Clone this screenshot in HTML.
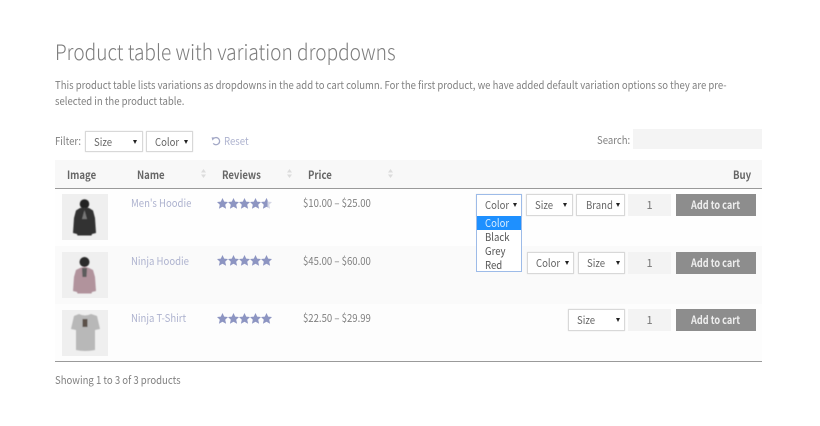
<!DOCTYPE html>
<html><head><meta charset="utf-8"><style>
html,body{margin:0;padding:0;background:#fff}
body{width:820px;height:426px;position:relative;overflow:hidden;font-family:"Noto Sans CJK JP","Liberation Sans",sans-serif;font-size:11px;color:#808080;filter:blur(.25px)}
.a{position:absolute;white-space:nowrap}
.t{position:absolute;white-space:nowrap;line-height:14px;height:14px;transform:scaleX(.87);transform-origin:0 50%}
.s{position:absolute;box-sizing:border-box;background:#fff;border:1px solid #d8d8d8;box-shadow:0 0 1px #ddd;color:#666;font-size:11px;line-height:20px}
.s span{position:absolute;top:0;transform:scaleX(.87);transform-origin:0 50%}
.s i{position:absolute;top:8px;width:0;height:0;border-left:2.5px solid transparent;border-right:2.5px solid transparent;border-top:4px solid #222}
.q{position:absolute;left:628px;width:43px;height:22px;background:#f3f3f3;color:#777;text-align:center;line-height:22px;font-size:11px}
.b{position:absolute;left:676px;width:80px;height:22px;background:#8d8d8d;color:#eee;text-align:center;line-height:23px;font-size:11px;font-weight:700}
.b span{display:inline-block;transform:scaleX(.83)}
.h{font-weight:700;color:#666;font-size:11px}
.n{color:#aeb3cf;font-size:11px}
.p{color:#808080;font-size:11px}
.im{position:absolute;left:62px;width:46px;height:46px}
.so{position:absolute;width:7px;height:11px}
.dd div{height:14px;line-height:14px;padding-left:8px}
.dd div span{display:inline-block;transform:scaleX(.87);transform-origin:0 50%}
</style></head><body>
<svg width="0" height="0" style="position:absolute"><defs><polygon id="st" points="5.5,0 7.2,3.6 11,4 8.2,6.700 9.100,10.800 5.500,8.800 1.900,10.800 2.800,6.700 0,4 3.800,3.600"/><filter id="bl"><feGaussianBlur stdDeviation=".5"/></filter><clipPath id="c"><rect x="0" width="6.500" height="11"/></clipPath></defs></svg>

<div class="a" style="left:55px;top:38px;font-size:21.5px;line-height:28px;color:#7d7d7d;font-weight:300;transform:scaleX(.888);transform-origin:0 50%">Product table with variation dropdowns</div>
<div class="t" style="left:55px;top:78px;font-size:10.8px;transform:scaleX(.883)">This product table lists variations as dropdowns in the add to cart column. For the first product, we have added default variation options so they are pre-</div>
<div class="t" style="left:55px;top:94px;font-size:10.8px;transform:scaleX(.883)">selected in the product table.</div>

<div class="t" style="left:55px;top:134px">Filter:</div>
<div class="s" style="left:85px;top:131px;width:58px;height:21px"><span style="left:8px">Size</span><i style="left:47px"></i></div>
<div class="s" style="left:146px;top:131px;width:47px;height:21px"><span style="left:8px">Color</span><i style="left:37px"></i></div>
<svg class="a" style="left:211px;top:136px" width="10" height="10" viewBox="0 0 10 10"><path d="M2 3.2A3.6 3.6 0 1 1 2.2 7.400" fill="none" stroke="#a3a8c6" stroke-width="1.3"/><path d="M.6 1.4 4 1.4 1.4 4.600Z" fill="#a3a8c6"/></svg>
<div class="t" style="left:224px;top:134px;color:#aeb3cf">Reset</div>
<div class="t" style="left:597px;top:133px">Search:</div>
<div class="a" style="left:633px;top:129px;width:129px;height:20px;background:#f4f4f4"></div>

<!-- table -->
<div class="a" style="left:55px;top:160px;width:707px;height:28px;background:#f8f8f8"></div>
<div class="a" style="left:55px;top:188px;width:707px;height:1px;background:#9a9a9a"></div>
<div class="a" style="left:55px;top:189px;width:707px;height:57px;background:#fefefe"></div>
<div class="a" style="left:55px;top:246px;width:707px;height:58px;background:#fafafa"></div>
<div class="a" style="left:55px;top:304px;width:707px;height:57px;background:#fdfdfd"></div>
<div class="a" style="left:55px;top:361px;width:707px;height:1px;background:#9a9a9a"></div>

<div class="t h" style="left:67px;top:168px">Image</div>
<div class="t h" style="left:137px;top:168px">Name</div>
<div class="t h" style="left:222px;top:168px">Reviews</div>
<div class="t h" style="left:308px;top:168px">Price</div>
<div class="t h" style="left:733px;top:168px">Buy</div>
<svg class="so" style="left:200px;top:168px" viewBox="0 0 7 11"><path d="M3.5 1 6 4.500H1ZM3.5 10 6 6.500H1Z" fill="#dcdcdc"/></svg>
<svg class="so" style="left:286px;top:168px" viewBox="0 0 7 11"><path d="M3.5 1 6 4.500H1ZM3.5 10 6 6.500H1Z" fill="#dcdcdc"/></svg>
<svg class="so" style="left:387px;top:168px" viewBox="0 0 7 11"><path d="M3.5 1 6 4.500H1ZM3.5 10 6 6.500H1Z" fill="#dcdcdc"/></svg>

<!-- images -->
<svg class="im" style="top:194px" viewBox="0 0 46 46"><rect width="46" height="46" fill="#efefef"/><g filter="url(#bl)"><circle cx="22.500" cy="10" r="4.800" fill="#222"/><path d="M18 14Q22.500 13 27 14L31 16.500 33 24 34 39 30 40 29.500 41.500H15.500L15 40 11 39 12 24 14 16.500Z" fill="#303030"/><path d="M22.500 16 25 25H20Z" fill="#777"/></g></svg>
<svg class="im" style="top:252px" viewBox="0 0 46 46"><rect width="46" height="46" fill="#efefef"/><g filter="url(#bl)"><path d="M18 16Q22.500 14 27 16L31 18 33 25 34 39 30 40 29.500 41.500H15.500L15 40 11 39 12 25 14 18Z" fill="#b1939c"/><circle cx="22.500" cy="10" r="5" fill="#2b2b2b"/><path d="M20 16H25L24.500 25H20.500Z" fill="#5c5c5c"/></g></svg>
<svg class="im" style="top:310px" viewBox="0 0 46 46"><rect width="46" height="46" fill="#efefef"/><g filter="url(#bl)"><path d="M17 4Q23 7 29 4L35 6 38 19 33 20 33 40Q23 42 14 40L14 20 9 19 12 6Z" fill="#b8b8b8"/><rect x="20.500" y="9" width="5" height="8" fill="#5b5149"/></g></svg>

<!-- row 1 -->
<div class="t n" style="left:131px;top:196px">Men's Hoodie</div>
<svg class="a" style="left:217px;top:198px" width="55" height="11" viewBox="0 0 55 11" fill="#8d95c2"><use href="#st"/><use href="#st" x="11"/><use href="#st" x="22"/><use href="#st" x="33"/><use href="#st" x="44" fill="#d5d7e6"/><g transform="translate(44 0)"><use href="#st" clip-path="url(#c)"/></g></svg>
<div class="t p" style="left:303px;top:196px">$10.00 – $25.00</div>
<div class="s" style="left:476px;top:194px;width:46px;height:23px;border-color:#9dbbe8;line-height:21px"><span style="left:8px">Color</span><i style="left:36px;top:8px"></i></div>
<div class="s" style="left:526px;top:194px;width:47px;height:22px"><span style="left:8px">Size</span><i style="left:36px"></i></div>
<div class="s" style="left:576px;top:194px;width:49px;height:22px"><span style="left:9px">Brand</span><i style="left:39px"></i></div>
<div class="q" style="top:194px">1</div>
<div class="b" style="top:194px"><span>Add to cart</span></div>

<!-- row 2 -->
<div class="t n" style="left:131px;top:254px">Ninja Hoodie</div>
<svg class="a" style="left:217px;top:255px" width="55" height="11" viewBox="0 0 55 11" fill="#8d95c2"><use href="#st"/><use href="#st" x="11"/><use href="#st" x="22"/><use href="#st" x="33"/><use href="#st" x="44"/></svg>
<div class="t p" style="left:303px;top:254px">$45.00 – $60.00</div>
<div class="s" style="left:527px;top:252px;width:47px;height:22px"><span style="left:8px">Color</span><i style="left:37px"></i></div>
<div class="s" style="left:578px;top:252px;width:47px;height:22px"><span style="left:8px">Size</span><i style="left:37px"></i></div>
<div class="q" style="top:252px">1</div>
<div class="b" style="top:252px"><span>Add to cart</span></div>

<!-- row 3 -->
<div class="t n" style="left:131px;top:311px">Ninja T-Shirt</div>
<svg class="a" style="left:217px;top:313px" width="55" height="11" viewBox="0 0 55 11" fill="#8d95c2"><use href="#st"/><use href="#st" x="11"/><use href="#st" x="22"/><use href="#st" x="33"/><use href="#st" x="44"/></svg>
<div class="t p" style="left:303px;top:311px">$22.50 – $29.99</div>
<div class="s" style="left:568px;top:309px;width:57px;height:22px"><span style="left:8px">Size</span><i style="left:47px"></i></div>
<div class="q" style="top:309px">1</div>
<div class="b" style="top:309px"><span>Add to cart</span></div>

<!-- dropdown -->
<div class="a dd" style="left:476px;top:216px;width:46px;height:56px;box-sizing:border-box;background:#fff;border:1px solid #9dbbe8;border-top:0;color:#555;font-size:11px">
<div style="background:#1e90ff;color:#d8ecff"><span>Color</span></div>
<div><span>Black</span></div>
<div><span>Grey</span></div>
<div><span>Red</span></div>
</div>

<div class="t" style="left:55px;top:373px">Showing 1 to 3 of 3 products</div>
</body></html>
